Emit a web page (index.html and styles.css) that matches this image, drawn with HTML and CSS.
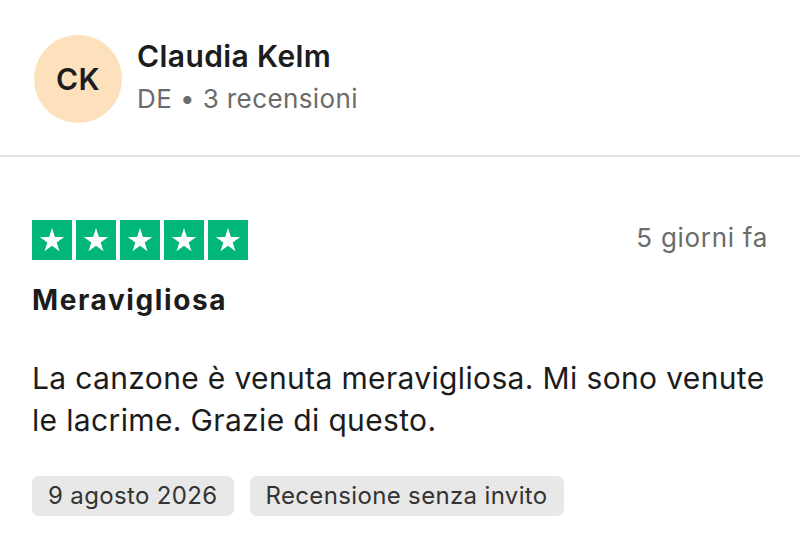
FILE: index.html
```html
<!DOCTYPE html>
<html lang="it">
<head>
    <meta charset="UTF-8">
    <meta name="viewport" content="width=device-width, initial-scale=1.0">
    <title>Recensione - Claudia Kelm</title>
    <link rel="stylesheet" href="styles.css">
</head>
<body>
    <div class="profile">
        <div class="avatar">CK</div>
        <div class="profile-info">
            <div class="name">Claudia Kelm</div>
            <div class="meta">DE &bull; 3 recensioni</div>
        </div>
    </div>

    <div class="review">
        <div class="review-top">
            <div class="stars">
                <span class="star"><svg viewBox="0 0 40 40"><polygon points="20,8 22.9,16.9 32.2,16.9 24.7,22.4 27.5,31.3 20,25.8 12.5,31.3 15.3,22.4 7.8,16.9 17.1,16.9" fill="#fff"/></svg></span>
                <span class="star"><svg viewBox="0 0 40 40"><polygon points="20,8 22.9,16.9 32.2,16.9 24.7,22.4 27.5,31.3 20,25.8 12.5,31.3 15.3,22.4 7.8,16.9 17.1,16.9" fill="#fff"/></svg></span>
                <span class="star"><svg viewBox="0 0 40 40"><polygon points="20,8 22.9,16.9 32.2,16.9 24.7,22.4 27.5,31.3 20,25.8 12.5,31.3 15.3,22.4 7.8,16.9 17.1,16.9" fill="#fff"/></svg></span>
                <span class="star"><svg viewBox="0 0 40 40"><polygon points="20,8 22.9,16.9 32.2,16.9 24.7,22.4 27.5,31.3 20,25.8 12.5,31.3 15.3,22.4 7.8,16.9 17.1,16.9" fill="#fff"/></svg></span>
                <span class="star"><svg viewBox="0 0 40 40"><polygon points="20,8 22.9,16.9 32.2,16.9 24.7,22.4 27.5,31.3 20,25.8 12.5,31.3 15.3,22.4 7.8,16.9 17.1,16.9" fill="#fff"/></svg></span>
            </div>
            <div class="date-ago">5 giorni fa</div>
        </div>

        <h2 class="title">Meravigliosa</h2>
        <p class="text">La canzone è venuta meravigliosa. Mi sono venute le lacrime. Grazie di questo.</p>

        <div class="tags">
            <span class="tag">9 agosto 2026</span>
            <span class="tag">Recensione senza invito</span>
        </div>
    </div>
</body>
</html>
```

FILE: styles.css
```css
body {
    font-family: Inter, 'Liberation Sans', sans-serif;
    background-color: #fff;
    color: #1c1c1c;
    margin: 0;
}
.profile {
    display: flex;
    align-items: flex-start;
    gap: 15px;
    padding: 35px 32px 32px 34px;
    border-bottom: 2px solid #e5e5e5;
}
.avatar {
    width: 88px;
    height: 88px;
    border-radius: 50%;
    background-color: #fde1bd;
    display: flex;
    align-items: center;
    justify-content: center;
    font-size: 30px;
    font-weight: 600;
    letter-spacing: 0.5px;
    color: #1c1c1c;
}
.profile-info {
    margin-top: 2px;
}
.name {
    font-size: 30px;
    font-weight: 600;
    letter-spacing: 0.4px;
    line-height: 38px;
}
.meta {
    font-size: 26px;
    letter-spacing: 0.4px;
    line-height: 38px;
    margin-top: 5px;
    color: #6b6b6b;
}
.review {
    padding: 63px 32px 0;
}
.review-top {
    display: flex;
    justify-content: space-between;
    align-items: flex-start;
}
.stars {
    display: flex;
    gap: 4px;
}
.star {
    width: 40px;
    height: 40px;
    background-color: #00b67a;
}
.star svg {
    display: block;
    width: 40px;
    height: 40px;
}
.date-ago {
    font-size: 26px;
    letter-spacing: 0.7px;
    line-height: 32px;
    margin-top: 2px;
    color: #6b6b6b;
}
.title {
    font-size: 28px;
    font-weight: 700;
    letter-spacing: 1.6px;
    line-height: 40px;
    margin: 20px 0 0;
}
.text {
    font-size: 30px;
    letter-spacing: 0.35px;
    line-height: 42px;
    margin: 37px 0 0;
}
.tags {
    display: flex;
    gap: 16px;
    margin-top: 35px;
}
.tag {
    background-color: #e8e8e8;
    border-radius: 7px;
    padding: 0 16px;
    height: 40px;
    line-height: 40px;
    font-size: 24px;
    letter-spacing: 0.35px;
    color: #333;
}
```
